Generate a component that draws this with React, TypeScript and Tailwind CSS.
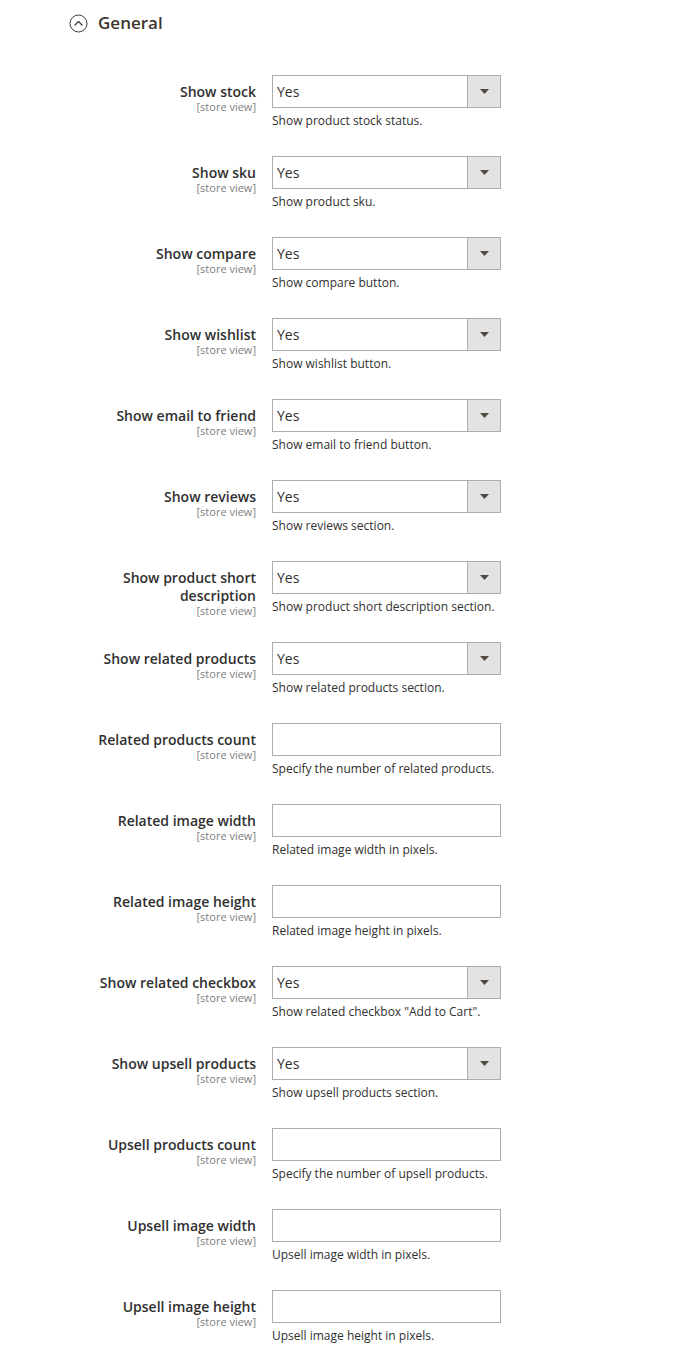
type Field = {
  label: string;
  note: string;
  select?: boolean;
};

const fields: Field[] = [
  { label: "Show stock", note: "Show product stock status.", select: true },
  { label: "Show sku", note: "Show product sku.", select: true },
  { label: "Show compare", note: "Show compare button.", select: true },
  { label: "Show wishlist", note: "Show wishlist button.", select: true },
  { label: "Show email to friend", note: "Show email to friend button.", select: true },
  { label: "Show reviews", note: "Show reviews section.", select: true },
  { label: "Show product short description", note: "Show product short description section.", select: true },
  { label: "Show related products", note: "Show related products section.", select: true },
  { label: "Related products count", note: "Specify the number of related products." },
  { label: "Related image width", note: "Related image width in pixels." },
  { label: "Related image height", note: "Related image height in pixels." },
  { label: "Show related checkbox", note: 'Show related checkbox "Add to Cart".', select: true },
  { label: "Show upsell products", note: "Show upsell products section.", select: true },
  { label: "Upsell products count", note: "Specify the number of upsell products." },
  { label: "Upsell image width", note: "Upsell image width in pixels." },
  { label: "Upsell image height", note: "Upsell image height in pixels." },
];

function SelectBox() {
  return (
    <div className="flex h-[33px] w-[229px] shrink-0 border border-[#adadad] bg-white">
      <div className="flex flex-1 items-center pl-[4px] text-[14px] text-[#303030]">Yes</div>
      <div className="flex w-[33px] items-center justify-center border-l border-[#adadad] bg-[#e3e3e3]">
        <svg width="9" height="5" viewBox="0 0 9 5">
          <path d="M0 0h9L4.5 5Z" fill="#514943" />
        </svg>
      </div>
    </div>
  );
}

function App() {
  return (
    <div className="min-h-screen w-full bg-white font-['Open_Sans',sans-serif] text-[#303030]">
      {/* section header */}
      <div className="flex items-center gap-[10px] pl-[69px] pt-[13px]">
        <svg width="19" height="19" viewBox="0 0 19 19" fill="none">
          <circle cx="9.5" cy="9.5" r="8.5" stroke="#41362f" strokeWidth="1" />
          <path d="M6 11l3.5-3.5L13 11" stroke="#41362f" strokeWidth="1.2" strokeLinecap="round" strokeLinejoin="round" />
        </svg>
        <p className="text-[17px] font-semibold leading-[20px] text-[#41362f]">General</p>
      </div>

      <div className="flex flex-col gap-[25px] pt-[42px]">
        {fields.map((f) => (
          <div key={f.label} className="flex h-[56px] gap-[16px]">
            <div className="flex w-[256px] flex-col items-end pt-[8px] text-right">
              <p className="w-[170px] text-[14px] font-semibold leading-[18px] text-[#303030]">{f.label}</p>
              <p className="text-[11px] leading-[12px] text-[#808080]">[store view]</p>
            </div>
            <div className="flex w-[229px] flex-col">
              {f.select ? (
                <SelectBox />
              ) : (
                <div className="h-[33px] w-[229px] shrink-0 border border-[#adadad] bg-white" />
              )}
              <p className="mt-[5px] text-[12px] leading-[16px] text-[#303030]">{f.note}</p>
            </div>
          </div>
        ))}
      </div>
    </div>
  );
}

export default App;
